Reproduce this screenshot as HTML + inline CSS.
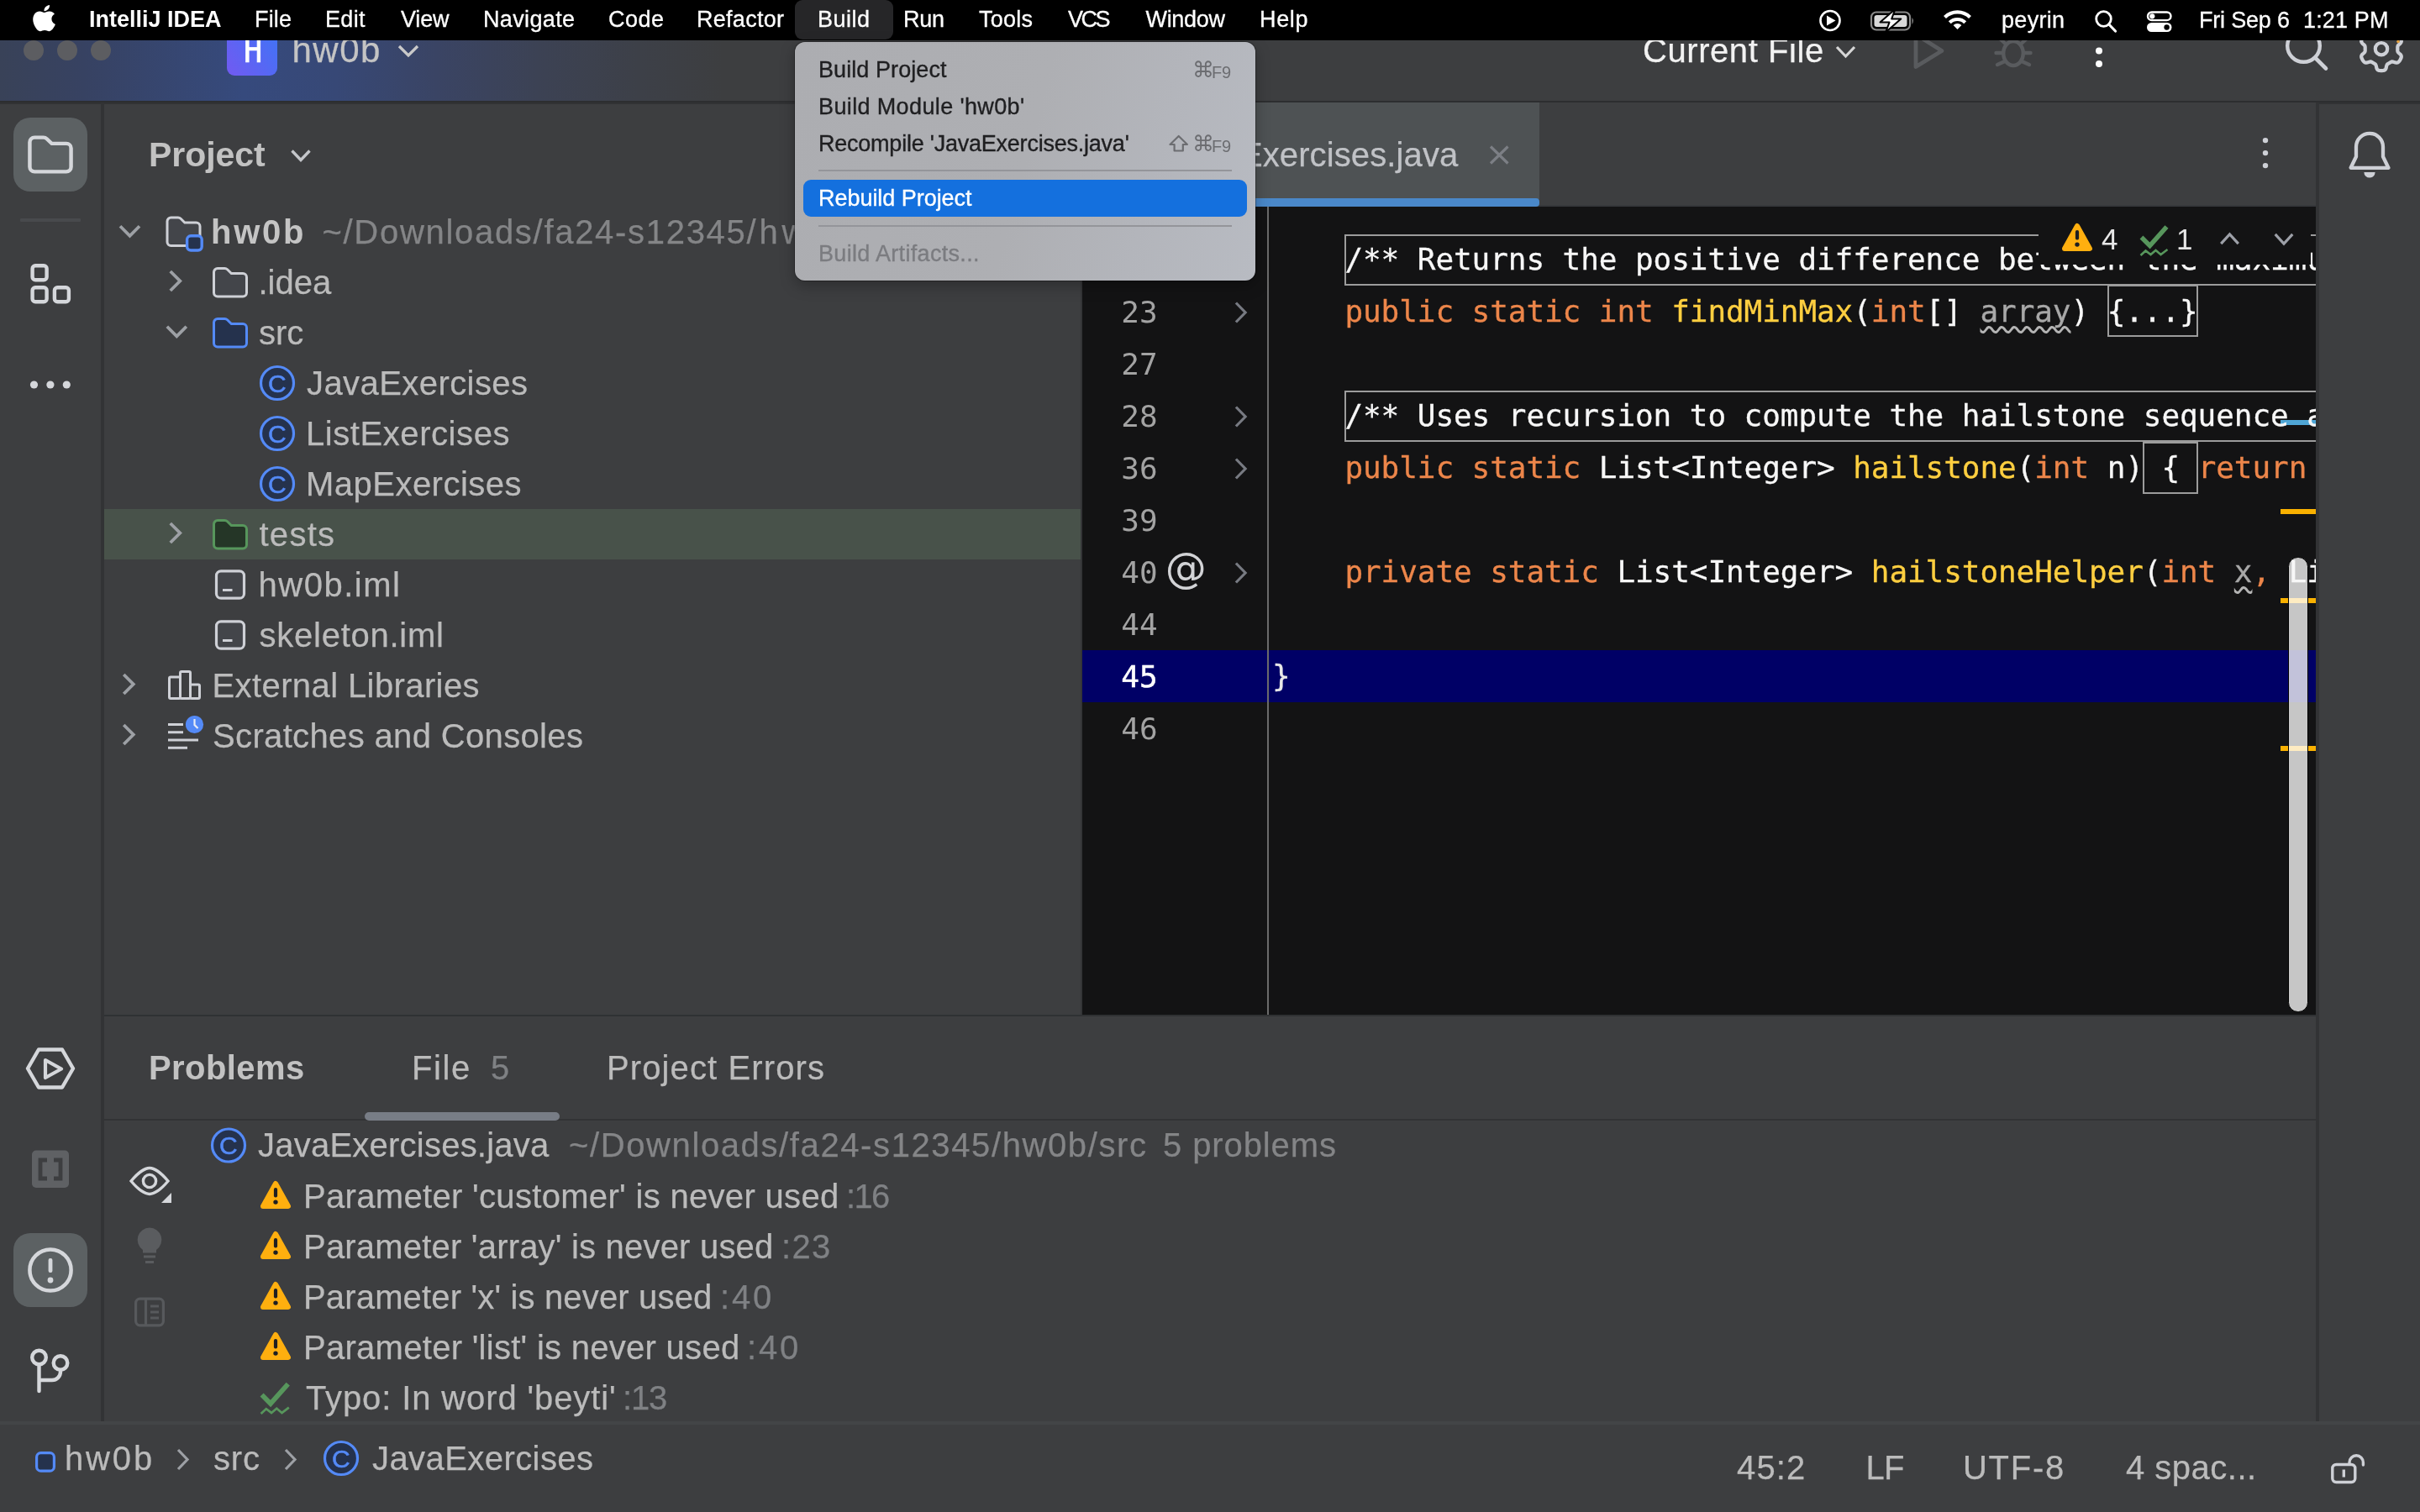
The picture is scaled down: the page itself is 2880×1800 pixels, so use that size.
<!DOCTYPE html>
<html lang="en"><head><meta charset="utf-8"><title>hw0b – JavaExercises.java</title>
<style>
*{margin:0;padding:0;box-sizing:border-box}
html,body{width:2880px;height:1800px;overflow:hidden;background:#3d3e40}
body{position:relative;font-family:"Liberation Sans", sans-serif;-webkit-font-smoothing:antialiased}
.a{position:absolute}
.t{position:absolute;white-space:pre;display:block}
#root{position:absolute;left:0;top:0;width:2880px;height:1800px;will-change:transform}
svg.ov{position:absolute;left:0;top:0;overflow:visible}
#menubar{left:0;top:0;width:2880px;height:48px;background:#000}
#mbsel{left:946px;top:0;width:117px;height:47px;border-radius:9px;background:#262628}
#titlebar{left:0;top:48px;width:2880px;height:72px;background:linear-gradient(90deg,#394258 0px,#374262 100px,#364a7d 290px,#374876 400px,#3a4464 520px,#3c4254 640px,#3d4048 760px,#3d3e40 860px)}
#titleline{left:0;top:120px;width:2880px;height:2px;background:#2d2e30}
.tl2{position:absolute;top:122px;height:2px;background:#313234}
#hicon{left:270px;top:20px;width:60px;height:70px;border-radius:9px;background:linear-gradient(55deg,#725af1 0%,#5568f4 50%,#3a78f6 100%)}
#lstripe{left:120px;top:122px;width:4px;height:1571px;background:#323335}
#rstripe{left:2756px;top:122px;width:4px;height:1571px;background:#323335}
#projsel{left:124px;top:606px;width:1164px;height:60px;background:#48524a}
#editor{left:1288px;top:246px;width:1468px;height:962px;background:#131314;overflow:hidden}
#tabline{left:1288px;top:244px;width:1468px;height:2px;background:#36383b}
#tab{left:1300px;top:122px;width:532px;height:115px;background:#4e5254}
#tabul{left:1300px;top:236px;width:532px;height:10px;background:#4a88c9;border-radius:0 4px 4px 0}
#bottomline{left:124px;top:1208px;width:2632px;height:2px;background:#2f3133}
#ptabline{left:124px;top:1332px;width:2632px;height:2px;background:#323335}
#ptabul{left:434px;top:1324px;width:232px;height:10px;background:#787d86;border-radius:5px}
#statusline{left:0;top:1692px;width:2880px;height:4px;background:#434547}
/* editor internals (coords relative to #editor: x-1288,y-246) */
#caretrow{left:0;top:528px;width:1468px;height:62px;background:#000066}
#gutline{left:220px;top:0;width:2px;height:962px;background:#6b6b6b}
.cl{-webkit-text-stroke:0.3px currentColor;position:absolute;left:226px;height:62px;line-height:62px;font-family:"DejaVu Sans Mono", "Liberation Mono", monospace;font-size:36px;letter-spacing:-0.074px;white-space:pre;color:#f7f7f7}
.ln{padding-top:1px;position:absolute;left:0;width:89.5px;text-align:right;height:62px;line-height:62px;font-family:"DejaVu Sans Mono", "Liberation Mono", monospace;font-size:36px;letter-spacing:-0.074px}
.un{color:#a8a8a8;text-decoration:underline wavy #b4b4b4;text-decoration-thickness:3px;text-underline-offset:5px;text-decoration-skip-ink:none}
.box{position:absolute;border:2px solid #9c9c9c}
.mark{position:absolute;left:1426px;width:42px;height:6px}
#thumb{left:1435px;top:417px;width:23.5px;height:542px;border-radius:11.5px;background:rgba(255,255,255,.76);border:1.5px solid #000}
#widget{left:1138px;top:0;width:324px;height:68.5px;background:#131314}
/* popup */
#popup{left:946px;top:50px;width:548px;height:284px;border-radius:12px;background:linear-gradient(105deg,#acadb1 0%,#aeafb3 50%,#b3b5bb 75%,#b8bbc2 100%);box-shadow:0 0 0 1px rgba(0,0,0,.3),0 6px 18px rgba(0,0,0,.28)}
#popsel{left:956px;top:214px;width:528px;height:44px;border-radius:9px;background:#1470de}
.psep{position:absolute;left:974px;width:492px;height:2px;background:#94959a}
</style></head>
<body>
<div id="root">
<div id="titlebar" class="a"></div>
<div id="hicon" class="a"></div>
<div id="titleline" class="a"></div>
<div class="tl2" style="left:0;width:1287px"></div>
<div class="tl2" style="left:2756px;width:124px"></div>
<div id="lstripe" class="a"></div>
<div id="rstripe" class="a"></div>
<div id="projsel" class="a"></div>
<div class="a" style="left:1286px;top:123px;width:2px;height:1085px;background:#343537"></div>
<div id="tab" class="a"></div>
<div id="tabline" class="a"></div>
<div id="tabul" class="a"></div>
<div id="editor" class="a">
<div id="caretrow" class="a"></div>
<div class="mark" style="top:254px;background:#4fa6d6"></div>
<div class="mark" style="top:360px;background:#f9b100"></div>
<div class="mark" style="top:466px;background:#f9b100"></div>
<div class="mark" style="top:642px;background:#f9b100"></div>
<div id="thumb" class="a"></div>
<div id="gutline" class="a"></div>
<div class="ln" style="top:94px;color:#a3a3a3;">23</div>
<div class="ln" style="top:156px;color:#a3a3a3;">27</div>
<div class="ln" style="top:218px;color:#a3a3a3;">28</div>
<div class="ln" style="top:280px;color:#a3a3a3;">36</div>
<div class="ln" style="top:342px;color:#a3a3a3;">39</div>
<div class="ln" style="top:404px;color:#a3a3a3;">40</div>
<div class="ln" style="top:466px;color:#a3a3a3;">44</div>
<div class="ln" style="top:528px;color:#ffffff;-webkit-text-stroke:0.5px #fff;">45</div>
<div class="ln" style="top:590px;color:#a3a3a3;">46</div>
<div class="box" style="left:311.5px;top:32.5px;width:1300px;height:61.5px"></div>
<div class="box" style="left:311.5px;top:218.5px;width:1300px;height:61.5px"></div>
<div class="box" style="left:1219.5px;top:93px;width:108px;height:62px"></div>
<div class="box" style="left:1262px;top:279.5px;width:66px;height:62px"></div>
<div class="cl" style="top:32px">    <span style="color:#f7f7f7">/** Returns the positive difference between the maximum element and the minimum</span></div>
<div class="cl" style="top:94px">    <span style="color:#ed864a">public static int </span><span style="color:#ffcf40">findMinMax</span><span style="color:#f7f7f7">(</span><span style="color:#ed864a">int</span><span style="color:#f7f7f7">[] </span><span class="un">array</span><span style="color:#f7f7f7">) {...}</span></div>
<div class="cl" style="top:218px">    <span style="color:#f7f7f7">/** Uses recursion to compute the hailstone sequence and return it as a list</span></div>
<div class="cl" style="top:280px">    <span style="color:#ed864a">public static </span><span style="color:#f7f7f7">List&lt;Integer&gt; </span><span style="color:#ffcf40">hailstone</span><span style="color:#f7f7f7">(</span><span style="color:#ed864a">int </span><span style="color:#f7f7f7">n) { </span><span style="color:#ed864a">return </span><span style="color:#f7f7f7">hailstoneHelper(n);</span></div>
<div class="cl" style="top:404px">    <span style="color:#ed864a">private static </span><span style="color:#f7f7f7">List&lt;Integer&gt; </span><span style="color:#ffcf40">hailstoneHelper</span><span style="color:#f7f7f7">(</span><span style="color:#ed864a">int </span><span class="un">x</span><span style="color:#ed864a">, </span><span style="color:#f7f7f7">List&lt;Integer&gt; list) {...}</span></div>
<div class="cl" style="top:528px"><span style="color:#e8e8e8">}</span></div>
<div id="widget" class="a"></div>
</div>
<div id="bottomline" class="a"></div>
<div id="ptabline" class="a"></div>
<div id="ptabul" class="a"></div>
<div id="statusline" class="a"></div>
<svg class="ov" width="2880" height="1800" viewBox="0 0 2880 1800">
<rect x="16" y="140" width="88" height="88" rx="20" fill="#5c6163"/>
<path transform="translate(29.76,154.678) scale(3.78,3.62)" d="M1.5 4 A1.5 1.5 0 0 1 3 2.5 H5.8 a1.5 1.5 0 0 1 1.05 .43 L8.45 4.5 H13 A1.5 1.5 0 0 1 14.5 6 V12.2 A1.5 1.5 0 0 1 13 13.7 H3 A1.5 1.5 0 0 1 1.5 12.2 Z" fill="none" stroke="#d5d7db" stroke-width="1.18" stroke-linejoin="round"/>
<rect x="24" y="260" width="72" height="4" rx="1" fill="#484a4d"/>
<rect x="38.6" y="316.3" width="17" height="17" rx="3.5" fill="none" stroke="#d5d7db" stroke-width="4.4"/>
<rect x="38.6" y="342.3" width="17" height="17" rx="3.5" fill="none" stroke="#d5d7db" stroke-width="4.4"/>
<rect x="64.9" y="342.3" width="17" height="17" rx="3.5" fill="none" stroke="#d5d7db" stroke-width="4.4"/>
<circle cx="40.5" cy="458" r="4.6" fill="#d5d7db"/>
<circle cx="59.9" cy="458" r="4.6" fill="#d5d7db"/>
<circle cx="79.3" cy="458" r="4.6" fill="#d5d7db"/>
<path d="M46 1249.5 H74 L87 1272 L74 1294.5 H46 L33 1272 Z" fill="none" stroke="#d5d7db" stroke-width="4.4" stroke-linejoin="round"/>
<path d="M54 1262 L73 1272.5 L54 1283 Z" fill="none" stroke="#d5d7db" stroke-width="4.2" stroke-linejoin="round"/>
<rect x="38" y="1369.5" width="44" height="44.5" rx="5" fill="#5f6164"/>
<path d="M56 1381 H48 V1403 H56 M64 1381 H72 V1403 H64" fill="none" stroke="#3d3e40" stroke-width="4.8"/>
<rect x="16" y="1468" width="88" height="88" rx="20" fill="#5c6163"/>
<circle cx="60" cy="1512" r="24.6" fill="none" stroke="#d5d7db" stroke-width="4.5"/>
<rect x="57.6" y="1498" width="4.8" height="17" rx="2" fill="#d5d7db"/><circle cx="60" cy="1524" r="3.4" fill="#d5d7db"/>
<circle cx="46.5" cy="1616" r="8.3" fill="none" stroke="#d5d7db" stroke-width="4.4"/><circle cx="72" cy="1622.5" r="8.3" fill="none" stroke="#d5d7db" stroke-width="4.4"/><path d="M46.5 1625 V1656 M46.5 1643 H62 A10 10 0 0 0 72 1633 V1631" fill="none" stroke="#d5d7db" stroke-width="4.4" stroke-linecap="round"/>
<polyline points="347.5,179.5 358,190.5 368.5,179.5" fill="none" stroke="#c4c6ca" stroke-width="3.4"/>
<polyline points="143.0,269.25 154.5,280.75 166.0,269.25" fill="none" stroke="#9da0a5" stroke-width="3.8"/>
<path transform="translate(194.5,251.5) scale(3.0)" d="M1.5 4 A1.5 1.5 0 0 1 3 2.5 H5.8 a1.5 1.5 0 0 1 1.05 .43 L8.45 4.5 H13 A1.5 1.5 0 0 1 14.5 6 V12.2 A1.5 1.5 0 0 1 13 13.7 H3 A1.5 1.5 0 0 1 1.5 12.2 Z" fill="#43454a" stroke="#ced0d6" stroke-width="1"/>
<rect x="222.6" y="280.8" width="17.6" height="17.2" rx="4.5" fill="#25324d" stroke="#548af7" stroke-width="3.4"/>
<polyline points="202.75,323.0 214.25,334.5 202.75,346.0" fill="none" stroke="#9da0a5" stroke-width="3.8"/>
<path transform="translate(250,312.0) scale(3.0)" d="M1.5 4 A1.5 1.5 0 0 1 3 2.5 H5.8 a1.5 1.5 0 0 1 1.05 .43 L8.45 4.5 H13 A1.5 1.5 0 0 1 14.5 6 V12.2 A1.5 1.5 0 0 1 13 13.7 H3 A1.5 1.5 0 0 1 1.5 12.2 Z" fill="#43454a" stroke="#ced0d6" stroke-width="1"/>
<polyline points="198.8,388.75 210.3,400.25 221.8,388.75" fill="none" stroke="#9da0a5" stroke-width="3.8"/>
<path transform="translate(250,372.0) scale(3.0)" d="M1.5 4 A1.5 1.5 0 0 1 3 2.5 H5.8 a1.5 1.5 0 0 1 1.05 .43 L8.45 4.5 H13 A1.5 1.5 0 0 1 14.5 6 V12.2 A1.5 1.5 0 0 1 13 13.7 H3 A1.5 1.5 0 0 1 1.5 12.2 Z" fill="#25324d" stroke="#548af7" stroke-width="1"/>
<circle cx="330" cy="456" r="19.5" fill="#25324d" stroke="#548af7" stroke-width="3.2"/><text x="329.8" y="466.6" text-anchor="middle" font-family="Liberation Sans, sans-serif" font-size="30" fill="#548af7" stroke="#548af7" stroke-width="0.55">C</text>
<circle cx="330" cy="516" r="19.5" fill="#25324d" stroke="#548af7" stroke-width="3.2"/><text x="329.8" y="526.6" text-anchor="middle" font-family="Liberation Sans, sans-serif" font-size="30" fill="#548af7" stroke="#548af7" stroke-width="0.55">C</text>
<circle cx="330" cy="576" r="19.5" fill="#25324d" stroke="#548af7" stroke-width="3.2"/><text x="329.8" y="586.6" text-anchor="middle" font-family="Liberation Sans, sans-serif" font-size="30" fill="#548af7" stroke="#548af7" stroke-width="0.55">C</text>
<polyline points="202.75,623.0 214.25,634.5 202.75,646.0" fill="none" stroke="#9da0a5" stroke-width="3.8"/>
<path transform="translate(250,612.0) scale(3.0)" d="M1.5 4 A1.5 1.5 0 0 1 3 2.5 H5.8 a1.5 1.5 0 0 1 1.05 .43 L8.45 4.5 H13 A1.5 1.5 0 0 1 14.5 6 V12.2 A1.5 1.5 0 0 1 13 13.7 H3 A1.5 1.5 0 0 1 1.5 12.2 Z" fill="#253627" stroke="#57965c" stroke-width="1"/>
<rect x="257.5" y="679.8" width="33" height="32.4" rx="5.5" fill="#43454a" stroke="#ced0d6" stroke-width="3.2"/><rect x="265" y="701" width="11.5" height="3" fill="#ced0d6"/>
<rect x="257.5" y="739.8" width="33" height="32.4" rx="5.5" fill="#43454a" stroke="#ced0d6" stroke-width="3.2"/><rect x="265" y="761" width="11.5" height="3" fill="#ced0d6"/>
<polyline points="147.25,803.0 158.75,814.5 147.25,826.0" fill="none" stroke="#9da0a5" stroke-width="3.8"/>
<g fill="none" stroke="#ced0d6" stroke-width="3"><rect x="201.5" y="806" width="13" height="25.5" rx="1.5"/><rect x="214.5" y="799.5" width="12" height="32" rx="1.5"/><rect x="226.5" y="815" width="11" height="16.5" rx="1.5"/></g>
<polyline points="147.25,863.0 158.75,874.5 147.25,886.0" fill="none" stroke="#9da0a5" stroke-width="3.8"/>
<g stroke="#ced0d6" stroke-width="3"><path d="M200 862.5 H218 M200 871.8 H218 M200 881 H236 M200 890.2 H223"/></g>
<circle cx="231.5" cy="862.5" r="10.6" fill="#548af7"/><path d="M231.5 856 V863 L235.5 867" fill="none" stroke="#e8ecf5" stroke-width="2.2"/>
<circle cx="40" cy="60" r="12" fill="#5c5d61"/>
<circle cx="80" cy="60" r="12" fill="#5c5d61"/>
<circle cx="120" cy="60" r="12" fill="#5c5d61"/>
<polyline points="475,55.0 486,66.0 497,55.0" fill="none" stroke="#c9c9c9" stroke-width="3.3"/>
<polyline points="2186.0,56.0 2196.5,67.0 2207.0,56.0" fill="none" stroke="#d6d6d6" stroke-width="3.2"/>
<path d="M2280 41 L2311 60.5 L2280 79.5 Z" fill="none" stroke="#595b5e" stroke-width="4.8" stroke-linejoin="round"/>
<g fill="none" stroke="#595b5e" stroke-width="4.4" stroke-linecap="round"><ellipse cx="2396" cy="63.5" rx="11.8" ry="14.5"/><path d="M2386.5 52 L2380 46 M2405.5 52 L2412 46 M2384 63 H2375.5 M2408 63 H2416.5 M2386 73 L2377 77 M2406 73 L2415 77"/></g>
<circle cx="2498" cy="60.4" r="4" fill="#ffffff"/>
<circle cx="2498" cy="76" r="4" fill="#ffffff"/>
<circle cx="2741.5" cy="54.5" r="19.3" fill="none" stroke="#ced0d6" stroke-width="4.4"/><path d="M2755.5 69 L2768 81.5" stroke="#ced0d6" stroke-width="4.6" stroke-linecap="round"/>
<path d="M2853.3 58.2 L2853.3 58.9 L2853.3 59.5 L2853.3 60.2 L2853.4 60.9 L2853.6 61.7 L2854.1 62.5 L2855.2 63.5 L2856.5 64.6 L2857.4 65.8 L2857.8 66.9 L2857.8 67.8 L2857.6 68.7 L2857.2 69.5 L2856.9 70.4 L2856.4 71.2 L2856.0 71.9 L2855.4 72.7 L2854.9 73.4 L2854.2 74.0 L2853.4 74.5 L2852.3 74.7 L2850.8 74.4 L2849.2 73.9 L2847.8 73.5 L2846.8 73.4 L2846.0 73.6 L2845.4 73.9 L2844.8 74.2 L2844.2 74.6 L2843.7 74.9 L2843.1 75.2 L2842.5 75.6 L2841.9 75.9 L2841.3 76.3 L2840.8 76.9 L2840.4 77.8 L2840.0 79.2 L2839.7 80.9 L2839.1 82.3 L2838.4 83.1 L2837.6 83.6 L2836.7 83.9 L2835.8 84.0 L2834.9 84.1 L2834.0 84.1 L2833.1 84.1 L2832.2 84.0 L2831.3 83.9 L2830.4 83.6 L2829.6 83.1 L2828.9 82.3 L2828.3 80.9 L2828.0 79.2 L2827.6 77.8 L2827.2 76.9 L2826.7 76.3 L2826.1 75.9 L2825.5 75.6 L2824.9 75.2 L2824.3 74.9 L2823.8 74.6 L2823.2 74.2 L2822.6 73.9 L2822.0 73.6 L2821.2 73.4 L2820.2 73.5 L2818.8 73.9 L2817.2 74.4 L2815.7 74.7 L2814.6 74.5 L2813.8 74.0 L2813.1 73.4 L2812.6 72.7 L2812.0 71.9 L2811.6 71.2 L2811.1 70.4 L2810.8 69.5 L2810.4 68.7 L2810.2 67.8 L2810.2 66.9 L2810.6 65.8 L2811.5 64.6 L2812.8 63.5 L2813.9 62.5 L2814.4 61.7 L2814.6 60.9 L2814.7 60.2 L2814.7 59.5 L2814.7 58.9 L2814.7 58.2 L2814.7 57.5 L2814.7 56.9 L2814.7 56.2 L2814.6 55.5 L2814.4 54.7 L2813.9 53.9 L2812.8 52.9 L2811.5 51.8 L2810.6 50.6 L2810.2 49.5 L2810.2 48.6 L2810.4 47.7 L2810.8 46.9 L2811.1 46.0 L2811.6 45.2 L2812.0 44.5 L2812.6 43.7 L2813.1 43.0 L2813.8 42.4 L2814.6 41.9 L2815.7 41.7 L2817.2 42.0 L2818.8 42.5 L2820.2 42.9 L2821.2 43.0 L2822.0 42.8 L2822.6 42.5 L2823.2 42.2 L2823.8 41.8 L2824.3 41.5 L2824.9 41.2 L2825.5 40.8 L2826.1 40.5 L2826.7 40.1 L2827.2 39.5 L2827.6 38.6 L2828.0 37.2 L2828.3 35.5 L2828.9 34.1 L2829.6 33.3 L2830.4 32.8 L2831.3 32.5 L2832.2 32.4 L2833.1 32.3 L2834.0 32.3 L2834.9 32.3 L2835.8 32.4 L2836.7 32.5 L2837.6 32.8 L2838.4 33.3 L2839.1 34.1 L2839.7 35.5 L2840.0 37.2 L2840.4 38.6 L2840.8 39.5 L2841.3 40.1 L2841.9 40.5 L2842.5 40.8 L2843.1 41.2 L2843.7 41.5 L2844.2 41.8 L2844.8 42.2 L2845.4 42.5 L2846.0 42.8 L2846.8 43.0 L2847.8 42.9 L2849.2 42.5 L2850.8 42.0 L2852.3 41.7 L2853.4 41.9 L2854.2 42.4 L2854.9 43.0 L2855.4 43.7 L2856.0 44.5 L2856.4 45.2 L2856.9 46.0 L2857.2 46.9 L2857.6 47.7 L2857.8 48.6 L2857.8 49.5 L2857.4 50.6 L2856.5 51.8 L2855.2 52.9 L2854.1 53.9 L2853.6 54.7 L2853.4 55.5 L2853.3 56.2 L2853.3 56.9 L2853.3 57.5 Z" fill="none" stroke="#ced0d6" stroke-width="4.2" stroke-linejoin="round"/><circle cx="2834" cy="58.2" r="7.2" fill="none" stroke="#ced0d6" stroke-width="4.2"/>
<circle cx="2854" cy="49.5" r="1.8" fill="#e8a33e"/>
<path d="M1774 174.5 L1794.5 194.5 M1794.5 174.5 L1774 194.5" stroke="#7c7f85" stroke-width="3.2"/>
<circle cx="2696" cy="167.1" r="3.2" fill="#ced0d6"/>
<circle cx="2696" cy="182.1" r="3.2" fill="#ced0d6"/>
<circle cx="2696" cy="197.1" r="3.2" fill="#ced0d6"/>
<path d="M2797.6 199.8 L2804 186.5 V174.8 A16 16 0 0 1 2836 174.8 V186.5 L2842.4 199.8 Z" fill="none" stroke="#ced0d6" stroke-width="4.3" stroke-linejoin="round"/><path d="M2813.4 205 A6.6 6.6 0 0 0 2826.6 205 Z" fill="#ced0d6"/>
<g fill="none" stroke="#d5d7db" stroke-width="3.4"><path d="M156 1406 C166 1394 174 1390.5 178 1390.5 C182 1390.5 190 1394 200 1406 C190 1418 182 1421.5 178 1421.5 C174 1421.5 166 1418 156 1406 Z"/><circle cx="178" cy="1406" r="7.6"/></g>
<path d="M204 1420 V1432 H192 Z" fill="#d5d7db"/>
<path d="M178 1461.5 A14.5 14.5 0 0 1 186 1488 V1491.5 H170 V1488 A14.5 14.5 0 0 1 178 1461.5 Z" fill="#5a5c5f"/><path d="M171 1496 H185 M173 1502.5 H183" stroke="#5a5c5f" stroke-width="3"/>
<g fill="none" stroke="#57595c" stroke-width="3.2"><rect x="161.6" y="1546.2" width="32.8" height="31.6" rx="5"/><path d="M173.5 1546 V1578 M179 1555 H189 M179 1562 H189 M179 1569 H189"/></g>
<circle cx="272" cy="1363.5" r="19.5" fill="#25324d" stroke="#548af7" stroke-width="3.2"/><text x="271.8" y="1374.1" text-anchor="middle" font-family="Liberation Sans, sans-serif" font-size="30" fill="#548af7" stroke="#548af7" stroke-width="0.55">C</text>
<path d="M328 1409.0 L343.0 1436.0 H313.0 Z" fill="#ffaf0f" stroke="#ffaf0f" stroke-width="6.0" stroke-linejoin="round"/><rect x="325.9" y="1414.0" width="4.2" height="11.5" rx="2.0" fill="#1e1f22"/><circle cx="328" cy="1431.1" r="2.7" fill="#1e1f22"/>
<path d="M328 1469.0 L343.0 1496.0 H313.0 Z" fill="#ffaf0f" stroke="#ffaf0f" stroke-width="6.0" stroke-linejoin="round"/><rect x="325.9" y="1474.0" width="4.2" height="11.5" rx="2.0" fill="#1e1f22"/><circle cx="328" cy="1491.1" r="2.7" fill="#1e1f22"/>
<path d="M328 1529.0 L343.0 1556.0 H313.0 Z" fill="#ffaf0f" stroke="#ffaf0f" stroke-width="6.0" stroke-linejoin="round"/><rect x="325.9" y="1534.0" width="4.2" height="11.5" rx="2.0" fill="#1e1f22"/><circle cx="328" cy="1551.1" r="2.7" fill="#1e1f22"/>
<path d="M328 1589.0 L343.0 1616.0 H313.0 Z" fill="#ffaf0f" stroke="#ffaf0f" stroke-width="6.0" stroke-linejoin="round"/><rect x="325.9" y="1594.0" width="4.2" height="11.5" rx="2.0" fill="#1e1f22"/><circle cx="328" cy="1611.1" r="2.7" fill="#1e1f22"/>
<polyline points="311.58,1660.6 321.98,1671.0 342.78,1647.6" fill="none" stroke="#57965c" stroke-width="5.720000000000001"/><polyline points="310.54,1682.96 316.78,1677.24 323.02,1681.92 329.26,1676.72 335.5,1681.92 343.82,1675.68" fill="none" stroke="#57965c" stroke-width="2.704"/>
<rect x="43.6" y="1729.6" width="20.8" height="21.6" rx="5" fill="#25324d" stroke="#548af7" stroke-width="3.2"/>
<polyline points="212.0,1726.0 223.0,1737.5 212.0,1749.0" fill="none" stroke="#9da0a5" stroke-width="3.2"/>
<polyline points="340.0,1726.0 351.0,1737.5 340.0,1749.0" fill="none" stroke="#9da0a5" stroke-width="3.2"/>
<circle cx="406" cy="1736" r="19.5" fill="#25324d" stroke="#548af7" stroke-width="3.2"/><text x="405.8" y="1746.6" text-anchor="middle" font-family="Liberation Sans, sans-serif" font-size="30" fill="#548af7" stroke="#548af7" stroke-width="0.55">C</text>
<g fill="none" stroke="#ced0d6" stroke-width="3.4"><rect x="2775.8" y="1743.5" width="27" height="21" rx="4.5"/><path d="M2796 1743 V1741 A8.2 8.2 0 0 1 2812.4 1741 V1744" stroke-linecap="round"/><path d="M2789.3 1749.5 V1758.5"/></g>
<polyline points="1470.9,360.5 1482.1,372 1470.9,383.5" fill="none" stroke="#777a82" stroke-width="3.2"/>
<polyline points="1470.9,484.5 1482.1,496 1470.9,507.5" fill="none" stroke="#777a82" stroke-width="3.2"/>
<polyline points="1470.9,546.5 1482.1,558 1470.9,569.5" fill="none" stroke="#777a82" stroke-width="3.2"/>
<polyline points="1470.9,670.5 1482.1,682 1470.9,693.5" fill="none" stroke="#777a82" stroke-width="3.2"/>
<text x="1411.3" y="693.3" text-anchor="middle" font-family="DejaVu Sans, sans-serif" font-size="49" fill="#d2d3d6">@</text>
<path d="M2472 269.0 L2487.0 296.0 H2457.0 Z" fill="#ffaf0f" stroke="#ffaf0f" stroke-width="6.0" stroke-linejoin="round"/><rect x="2469.9" y="274.0" width="4.2" height="11.5" rx="2.0" fill="#1e1f22"/><circle cx="2472" cy="291.1" r="2.7" fill="#1e1f22"/>
<polyline points="2548.5,282.5 2558.5,292.5 2578.5,270.0" fill="none" stroke="#57965c" stroke-width="5.5"/><polyline points="2547.5,304.0 2553.5,298.5 2559.5,303.0 2565.5,298.0 2571.5,303.0 2579.5,297.0" fill="none" stroke="#57965c" stroke-width="2.6"/>
<polyline points="2643.2,290.1 2653.5,278.9 2663.8,290.1" fill="none" stroke="#9da0a8" stroke-width="3.2"/>
<polyline points="2707.7,278.9 2718,290.1 2728.3,278.9" fill="none" stroke="#9da0a8" stroke-width="3.2"/>
</svg>
<span class="t" style='left:290.0px;top:40.3px;font-size:41px;line-height:41px;color:#ffffff;font-family:"DejaVu Sans Mono", "Liberation Mono", monospace;-webkit-text-stroke:0.7px #fff;transform:scaleX(.9);transform-origin:left;'>H</span>
<span class="t" style='left:347.5px;top:39.4px;font-size:42px;line-height:42px;color:#c4c4c4;-webkit-text-stroke:0.25px currentColor;letter-spacing:1.48px;'>hw0b</span>
<span class="t" style='left:1955.0px;top:40.1px;font-size:40px;line-height:40px;color:#f2f2f2;-webkit-text-stroke:0.25px currentColor;letter-spacing:0.57px;'>Current File</span>
<span class="t" style='left:177.0px;top:163.8px;font-size:41px;line-height:41px;color:#c2c2c2;font-weight:700;letter-spacing:-0.06px;'>Project</span>
<span class="t" style='left:251.0px;top:256.1px;font-size:40px;line-height:40px;color:#c4c4c4;font-weight:700;letter-spacing:2.74px;'>hw0b</span>
<span class="t" style='left:383.5px;top:256.1px;font-size:40px;line-height:40px;color:#848587;-webkit-text-stroke:0.25px currentColor;letter-spacing:1.70px;'>~/Downloads/fa24-s12345/</span>
<span class="t" style='left:903.5px;top:256.1px;font-size:40px;line-height:40px;color:#848587;-webkit-text-stroke:0.25px currentColor;letter-spacing:4.71px;'>hw0b</span>
<span class="t" style='left:307.5px;top:316.1px;font-size:40px;line-height:40px;color:#bbbbbb;-webkit-text-stroke:0.25px currentColor;'>.idea</span>
<span class="t" style='left:308.0px;top:376.1px;font-size:40px;line-height:40px;color:#bbbbbb;-webkit-text-stroke:0.25px currentColor;'>src</span>
<span class="t" style='left:365.0px;top:436.1px;font-size:40px;line-height:40px;color:#bbbbbb;-webkit-text-stroke:0.25px currentColor;letter-spacing:0.43px;'>JavaExercises</span>
<span class="t" style='left:364.0px;top:496.1px;font-size:40px;line-height:40px;color:#bbbbbb;-webkit-text-stroke:0.25px currentColor;letter-spacing:0.57px;'>ListExercises</span>
<span class="t" style='left:364.0px;top:556.1px;font-size:40px;line-height:40px;color:#bbbbbb;-webkit-text-stroke:0.25px currentColor;letter-spacing:0.48px;'>MapExercises</span>
<span class="t" style='left:308.5px;top:616.1px;font-size:40px;line-height:40px;color:#bbbbbb;-webkit-text-stroke:0.25px currentColor;letter-spacing:1.26px;'>tests</span>
<span class="t" style='left:307.5px;top:676.1px;font-size:40px;line-height:40px;color:#bbbbbb;-webkit-text-stroke:0.25px currentColor;letter-spacing:1.51px;'>hw0b.iml</span>
<span class="t" style='left:308.5px;top:736.1px;font-size:40px;line-height:40px;color:#bbbbbb;-webkit-text-stroke:0.25px currentColor;letter-spacing:0.75px;'>skeleton.iml</span>
<span class="t" style='left:252.5px;top:796.1px;font-size:40px;line-height:40px;color:#bbbbbb;-webkit-text-stroke:0.25px currentColor;letter-spacing:0.40px;'>External Libraries</span>
<span class="t" style='left:253.0px;top:856.1px;font-size:40px;line-height:40px;color:#bbbbbb;-webkit-text-stroke:0.25px currentColor;letter-spacing:0.35px;'>Scratches and Consoles</span>
<span class="t" style='left:1391.0px;top:164.1px;font-size:40px;line-height:40px;color:#c0c2c6;-webkit-text-stroke:0.25px currentColor;letter-spacing:0.11px;'>JavaExercises.java</span>
<span class="t" style='left:177.0px;top:1251.1px;font-size:40px;line-height:40px;color:#c2c2c2;font-weight:700;letter-spacing:0.42px;'>Problems</span>
<span class="t" style='left:490.0px;top:1251.1px;font-size:40px;line-height:40px;color:#bbbbbb;-webkit-text-stroke:0.25px currentColor;letter-spacing:1.60px;'>File</span>
<span class="t" style='left:584.0px;top:1251.1px;font-size:40px;line-height:40px;color:#7f8184;-webkit-text-stroke:0.25px currentColor;'>5</span>
<span class="t" style='left:722.0px;top:1251.1px;font-size:40px;line-height:40px;color:#bbbbbb;-webkit-text-stroke:0.25px currentColor;letter-spacing:1.12px;'>Project Errors</span>
<span class="t" style='left:307.0px;top:1343.1px;font-size:40px;line-height:40px;color:#bbbbbb;-webkit-text-stroke:0.25px currentColor;letter-spacing:0.23px;'>JavaExercises.java</span>
<span class="t" style='left:677.0px;top:1343.1px;font-size:40px;line-height:40px;color:#848587;-webkit-text-stroke:0.25px currentColor;letter-spacing:1.61px;'>~/Downloads/fa24-s12345/hw0b/src</span>
<span class="t" style='left:1384.0px;top:1343.1px;font-size:40px;line-height:40px;color:#848587;-webkit-text-stroke:0.25px currentColor;letter-spacing:0.90px;'>5 problems</span>
<span class="t" style='left:361.0px;top:1404.1px;font-size:40px;line-height:40px;color:#bbbbbb;-webkit-text-stroke:0.25px currentColor;letter-spacing:0.32px;'>Parameter 'customer' is never used</span>
<span class="t" style='left:1007.0px;top:1404.1px;font-size:40px;line-height:40px;color:#7f8184;-webkit-text-stroke:0.25px currentColor;letter-spacing:-1.68px;'>:16</span>
<span class="t" style='left:361.0px;top:1464.1px;font-size:40px;line-height:40px;color:#bbbbbb;-webkit-text-stroke:0.25px currentColor;letter-spacing:0.20px;'>Parameter 'array' is never used</span>
<span class="t" style='left:930.0px;top:1464.1px;font-size:40px;line-height:40px;color:#7f8184;-webkit-text-stroke:0.25px currentColor;letter-spacing:1.32px;'>:23</span>
<span class="t" style='left:361.0px;top:1524.1px;font-size:40px;line-height:40px;color:#bbbbbb;-webkit-text-stroke:0.25px currentColor;letter-spacing:0.16px;'>Parameter 'x' is never used</span>
<span class="t" style='left:857.0px;top:1524.1px;font-size:40px;line-height:40px;color:#7f8184;-webkit-text-stroke:0.25px currentColor;letter-spacing:2.82px;'>:40</span>
<span class="t" style='left:361.0px;top:1584.1px;font-size:40px;line-height:40px;color:#bbbbbb;-webkit-text-stroke:0.25px currentColor;letter-spacing:0.28px;'>Parameter 'list' is never used</span>
<span class="t" style='left:889.0px;top:1584.1px;font-size:40px;line-height:40px;color:#7f8184;-webkit-text-stroke:0.25px currentColor;letter-spacing:2.82px;'>:40</span>
<span class="t" style='left:364.0px;top:1644.1px;font-size:40px;line-height:40px;color:#bbbbbb;-webkit-text-stroke:0.25px currentColor;letter-spacing:0.88px;'>Typo: In word 'beyti'</span>
<span class="t" style='left:741.0px;top:1644.1px;font-size:40px;line-height:40px;color:#7f8184;-webkit-text-stroke:0.25px currentColor;letter-spacing:-1.18px;'>:13</span>
<span class="t" style='left:77.0px;top:1716.1px;font-size:40px;line-height:40px;color:#bbbbbb;-webkit-text-stroke:0.25px currentColor;letter-spacing:2.87px;'>hw0b</span>
<span class="t" style='left:254.0px;top:1716.1px;font-size:40px;line-height:40px;color:#bbbbbb;-webkit-text-stroke:0.25px currentColor;letter-spacing:0.84px;'>src</span>
<span class="t" style='left:443.0px;top:1716.1px;font-size:40px;line-height:40px;color:#bbbbbb;-webkit-text-stroke:0.25px currentColor;letter-spacing:0.43px;'>JavaExercises</span>
<span class="t" style='left:2067.0px;top:1726.6px;font-size:40px;line-height:40px;color:#bbbbbb;-webkit-text-stroke:0.25px currentColor;letter-spacing:1.13px;'>45:2</span>
<span class="t" style='left:2220.5px;top:1726.6px;font-size:40px;line-height:40px;color:#bbbbbb;-webkit-text-stroke:0.25px currentColor;letter-spacing:-0.75px;'>LF</span>
<span class="t" style='left:2336.0px;top:1726.6px;font-size:40px;line-height:40px;color:#bbbbbb;-webkit-text-stroke:0.25px currentColor;letter-spacing:1.73px;'>UTF-8</span>
<span class="t" style='left:2530.0px;top:1726.6px;font-size:40px;line-height:40px;color:#bbbbbb;-webkit-text-stroke:0.25px currentColor;letter-spacing:0.49px;'>4 spac...</span>
<span class="t" style='left:2501.0px;top:266.9px;font-size:35px;line-height:35px;color:#e6e6e6;'>4</span>
<span class="t" style='left:2590.0px;top:266.9px;font-size:35px;line-height:35px;color:#e6e6e6;'>1</span>
<div id="menubar" class="a"></div>
<div id="mbsel" class="a"></div>
<svg class="ov" width="2880" height="48" viewBox="0 0 2880 48">
<path transform="translate(36.2,6) scale(1.36,1.3)" d="M12.152 6.896c-.948 0-2.415-1.078-3.96-1.04-2.04.027-3.91 1.183-4.961 3.014-2.117 3.675-.546 9.103 1.519 12.09 1.013 1.454 2.208 3.09 3.792 3.039 1.52-.065 2.09-.987 3.935-.987 1.831 0 2.35.987 3.96.948 1.637-.026 2.676-1.48 3.676-2.948 1.156-1.688 1.636-3.325 1.662-3.415-.039-.013-3.182-1.221-3.22-4.857-.026-3.04 2.48-4.494 2.597-4.559-1.429-2.09-3.623-2.324-4.39-2.376-2-.156-3.675 1.09-4.61 1.09zM15.53 3.83c.843-1.012 1.4-2.427 1.245-3.83-1.207.052-2.662.805-3.532 1.818-.78.896-1.454 2.338-1.273 3.714 1.338.104 2.715-.688 3.559-1.701" fill="#fff"/>
<circle cx="2178" cy="24.5" r="11.5" fill="none" stroke="#fff" stroke-width="2.6"/><path d="M2174 18.5 L2184.5 24.5 L2174 30.5 Z" fill="#fff"/>
<rect x="2227" y="14.5" width="46" height="21" rx="6" fill="none" stroke="#8a8a8a" stroke-width="2.2"/><rect x="2230.5" y="18" width="39" height="14" rx="3.2" fill="#d9d9d9"/><path d="M2275.5 21 Q2278.5 24.5 2275.5 29 Z" fill="#8a8a8a"/><path d="M2255.5 10.8 L2237.5 26.6 H2248.5 L2244.2 38.2 L2262.3 22.4 H2251.2 Z" fill="#fff" stroke="#000" stroke-width="2" stroke-linejoin="round"/>
<g fill="none" stroke="#fff" stroke-width="4.2" stroke-linecap="butt"><path d="M2314.5 20.5 A21.5 21.5 0 0 1 2344.5 20.5"/><path d="M2320.3 26.8 A13 13 0 0 1 2338.7 26.8"/></g><path d="M2329.5 35 L2324.6 30 A7 7 0 0 1 2334.4 30 Z" fill="#fff"/>
<circle cx="2503.5" cy="22.5" r="8.8" fill="none" stroke="#fff" stroke-width="2.8"/><path d="M2509.8 29 L2517.5 37" stroke="#fff" stroke-width="3.2" stroke-linecap="round"/>
<rect x="2556" y="14.5" width="27.5" height="9.6" rx="4.8" fill="none" stroke="#fff" stroke-width="2.4"/><circle cx="2561.3" cy="19.3" r="3.1" fill="#fff"/><rect x="2555" y="27" width="29.5" height="11" rx="5.5" fill="#fff"/><circle cx="2578.6" cy="32.5" r="3.2" fill="#000"/>
</svg>
<span class="t" style='left:106.0px;top:10.1px;font-size:27px;line-height:27px;color:#ffffff;font-weight:700;'>IntelliJ IDEA</span>
<span class="t" style='left:303.0px;top:10.1px;font-size:27px;line-height:27px;color:#ffffff;letter-spacing:0.17px;-webkit-text-stroke:0.3px #fff;'>File</span>
<span class="t" style='left:387.0px;top:10.1px;font-size:27px;line-height:27px;color:#ffffff;letter-spacing:0.33px;-webkit-text-stroke:0.3px #fff;'>Edit</span>
<span class="t" style='left:477.0px;top:10.1px;font-size:27px;line-height:27px;color:#ffffff;letter-spacing:-0.18px;-webkit-text-stroke:0.3px #fff;'>View</span>
<span class="t" style='left:575.0px;top:10.1px;font-size:27px;line-height:27px;color:#ffffff;letter-spacing:0.35px;-webkit-text-stroke:0.3px #fff;'>Navigate</span>
<span class="t" style='left:724.0px;top:10.1px;font-size:27px;line-height:27px;color:#ffffff;letter-spacing:0.49px;-webkit-text-stroke:0.3px #fff;'>Code</span>
<span class="t" style='left:829.0px;top:10.1px;font-size:27px;line-height:27px;color:#ffffff;letter-spacing:0.28px;-webkit-text-stroke:0.3px #fff;'>Refactor</span>
<span class="t" style='left:973.0px;top:10.1px;font-size:27px;line-height:27px;color:#ffffff;letter-spacing:0.49px;-webkit-text-stroke:0.3px #fff;'>Build</span>
<span class="t" style='left:1075.0px;top:10.1px;font-size:27px;line-height:27px;color:#ffffff;letter-spacing:-0.26px;-webkit-text-stroke:0.3px #fff;'>Run</span>
<span class="t" style='left:1165.0px;top:10.1px;font-size:27px;line-height:27px;color:#ffffff;letter-spacing:0.24px;-webkit-text-stroke:0.3px #fff;'>Tools</span>
<span class="t" style='left:1271.0px;top:10.1px;font-size:27px;line-height:27px;color:#ffffff;letter-spacing:-2.50px;-webkit-text-stroke:0.3px #fff;'>VCS</span>
<span class="t" style='left:1363.5px;top:10.1px;font-size:27px;line-height:27px;color:#ffffff;letter-spacing:-0.31px;-webkit-text-stroke:0.3px #fff;'>Window</span>
<span class="t" style='left:1499.0px;top:10.1px;font-size:27px;line-height:27px;color:#ffffff;letter-spacing:0.66px;-webkit-text-stroke:0.3px #fff;'>Help</span>
<span class="t" style='left:2382.0px;top:10.6px;font-size:27px;line-height:27px;color:#ffffff;letter-spacing:0.30px;-webkit-text-stroke:0.3px #fff;'>peyrin</span>
<span class="t" style='left:2617.0px;top:10.6px;font-size:27px;line-height:27px;color:#ffffff;letter-spacing:-0.19px;-webkit-text-stroke:0.3px #fff;'>Fri Sep 6</span>
<span class="t" style='left:2741.0px;top:10.6px;font-size:27px;line-height:27px;color:#ffffff;letter-spacing:0.16px;-webkit-text-stroke:0.3px #fff;'>1:21 PM</span>
<div id="popup" class="a"></div>
<div id="popsel" class="a"></div>
<div class="psep" style="top:202px"></div>
<div class="psep" style="top:268px"></div>
<span class="t" style='left:974.0px;top:69.6px;font-size:27px;line-height:27px;color:#1f1f21;letter-spacing:0.08px;-webkit-text-stroke:0.35px currentColor;'>Build Project</span>
<span class="t" style='left:974.0px;top:113.6px;font-size:27px;line-height:27px;color:#1f1f21;letter-spacing:0.37px;-webkit-text-stroke:0.35px currentColor;'>Build Module 'hw0b'</span>
<span class="t" style='left:974.0px;top:157.6px;font-size:27px;line-height:27px;color:#1f1f21;letter-spacing:-0.23px;-webkit-text-stroke:0.35px currentColor;'>Recompile 'JavaExercises.java'</span>
<span class="t" style='left:974.0px;top:222.6px;font-size:27px;line-height:27px;color:#ffffff;letter-spacing:-0.04px;-webkit-text-stroke:0.35px currentColor;'>Rebuild Project</span>
<span class="t" style='left:974.0px;top:289.4px;font-size:27px;line-height:27px;color:#7b7c80;letter-spacing:0.32px;-webkit-text-stroke:0.35px currentColor;'>Build Artifacts...</span>
<span class="t" style='left:1442.0px;top:75.6px;font-size:20px;line-height:20px;color:#6c6d71;letter-spacing:-0.22px;'>F9</span>
<span class="t" style='left:1442.0px;top:163.6px;font-size:20px;line-height:20px;color:#6c6d71;letter-spacing:-0.22px;'>F9</span>
<span class="t" style="left:1419px;top:68px;font-size:26px;line-height:30px;color:#6c6d71;font-family:'DejaVu Sans',sans-serif">⌘</span>
<span class="t" style="left:1419px;top:156px;font-size:26px;line-height:30px;color:#6c6d71;font-family:'DejaVu Sans',sans-serif">⌘</span>
<svg class="ov" width="2880" height="400" viewBox="0 0 2880 400"><path d="M1402.7 162 L1392.5 172 H1397.6 V179.5 H1407.8 V172 H1412.9 Z" fill="none" stroke="#6c6d71" stroke-width="2.2" stroke-linejoin="round"/></svg>
</div>
</body></html>
